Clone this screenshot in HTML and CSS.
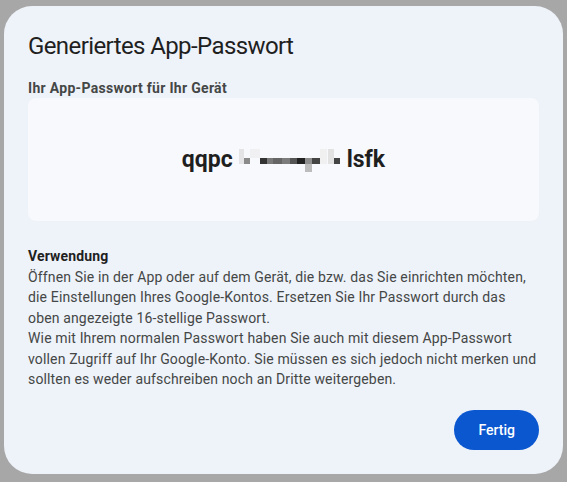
FILE: index.html
```html
<!DOCTYPE html>
<html lang="de">
<head>
<meta charset="utf-8">
<title>Generiertes App-Passwort</title>
<link rel="stylesheet" href="styles.css">
</head>
<body>
<div class="dialog">
  <h1 class="title">Generiertes App-Passwort</h1>
  <div class="label">Ihr App-Passwort für Ihr Gerät</div>
  <div class="pwbox">
    <span class="pw">qqpc</span>
    <svg class="blur" width="102" height="24" viewBox="0 0 102 24" aria-hidden="true">
      <rect x="0" y="0" width="5" height="15" fill="#e4e4e7"/>
      <rect x="5" y="9" width="6" height="6" fill="#8a8a8a"/>
      <rect x="11" y="0" width="10" height="9" fill="#f0f0f3"/>
      <rect x="21" y="9" width="7" height="6" fill="#333"/>
      <rect x="28" y="9" width="6" height="6" fill="#7a7a7a"/>
      <rect x="34" y="9" width="9" height="6" fill="#666"/>
      <rect x="43" y="9" width="8" height="6" fill="#7c7c7c"/>
      <rect x="51" y="9" width="7" height="6" fill="#555"/>
      <rect x="58" y="9" width="8" height="6" fill="#222"/>
      <rect x="66" y="9" width="7" height="6" fill="#8e8e8e"/>
      <rect x="66" y="15" width="7" height="8" fill="#bcbcbc"/>
      <rect x="73" y="9" width="8" height="6" fill="#444"/>
      <rect x="81" y="0" width="7" height="15" fill="#f0f0f0"/>
      <rect x="89" y="0" width="6" height="15" fill="#e2e2e2"/>
      <rect x="95" y="9" width="6" height="6" fill="#444"/>
    </svg>
    <span class="pw">lsfk</span>
  </div>
  <div class="usage">
    <div class="usage-head">Verwendung</div>
    <p class="usage-text">Öffnen Sie in der App oder auf dem Gerät, die bzw. das Sie einrichten möchten, die Einstellungen Ihres Google-Kontos. Ersetzen Sie Ihr Passwort durch das oben angezeigte 16-stellige Passwort.<br>Wie mit Ihrem normalen Passwort haben Sie auch mit diesem App-Passwort vollen Zugriff auf Ihr Google-Konto. Sie müssen es sich jedoch nicht merken und sollten es weder aufschreiben noch an Dritte weitergeben.</p>
  </div>
  <div class="actions">
    <button class="btn">Fertig</button>
  </div>
</div>
</body>
</html>
```
FILE: styles.css
```css
html, body {
  margin: 0;
  padding: 0;
}
body {
  background: #a7a7a7;
  height: 482px;
  overflow: hidden;
  font-family: Roboto, "Liberation Sans", sans-serif;
}
.dialog {
  box-sizing: border-box;
  margin: 6px 4px 0 4px;
  height: 468px;
  background: #eef2f9;
  border-radius: 28px;
  padding: 24px 24px 24px 24px;
  display: flex;
  flex-direction: column;
}
.title {
  margin: 0 0 16px;
  font-size: 24px;
  line-height: 32px;
  font-weight: 400;
  letter-spacing: -0.6px;
  color: #1f1f1f;
}
.label {
  font-size: 14px;
  line-height: 20px;
  font-weight: 700;
  letter-spacing: 0.3px;
  color: #444746;
}
.pwbox {
  height: 123px;
  background: #f8f9fd;
  border-radius: 8px;
  display: flex;
  align-items: center;
  justify-content: center;
  gap: 6px;
}
.pw {
  font-size: 23px;
  font-weight: 700;
  color: #1f1f1f;
  line-height: 28px;
}
.blur {
  display: block;
  margin-top: 2px;
}
.usage {
  margin-top: 25px;
  color: #444746;
  font-size: 14px;
  line-height: 20.5px;
  letter-spacing: 0.15px;
}
.usage-head {
  font-weight: 700;
  color: #1f1f1f;
}
.usage-text {
  margin: 0;
}
.actions {
  margin-top: auto;
  display: flex;
  justify-content: flex-end;
}
.btn {
  height: 40px;
  padding: 0 24px;
  border: none;
  border-radius: 20px;
  background: #0b57d0;
  color: #fff;
  font-family: Roboto, "Liberation Sans", sans-serif;
  font-size: 14px;
  font-weight: 500;
}
```
